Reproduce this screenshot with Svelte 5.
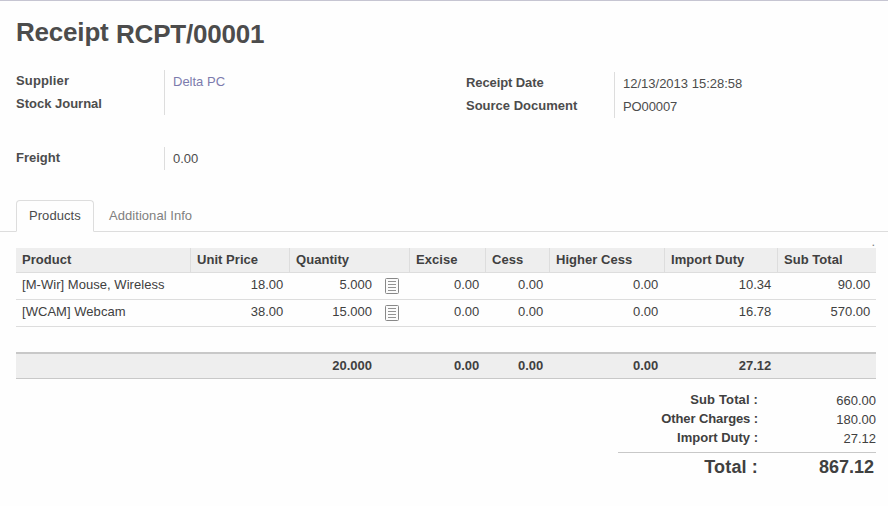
<script>
  const columns = ['Product', 'Unit Price', 'Quantity', 'Excise', 'Cess', 'Higher Cess', 'Import Duty', 'Sub Total'];
  const rows = [
    ['[M-Wir] Mouse, Wireless', '18.00', '5.000', '0.00', '0.00', '0.00', '10.34', '90.00'],
    ['[WCAM] Webcam', '38.00', '15.000', '0.00', '0.00', '0.00', '16.78', '570.00'],
  ];
  const sums = ['', '', '20.000', '0.00', '0.00', '0.00', '27.12', ''];
  const totals = [
    ['Sub Total :', '660.00'],
    ['Other Charges :', '180.00'],
    ['Import Duty :', '27.12'],
  ];
</script>

<main>
  <h1><span>Receipt</span><span class="number">RCPT/00001</span></h1>

  <div class="groups">
    <dl class="left">
      <div class="names"><dt class="wide">Supplier</dt><dt>Stock Journal</dt></div>
      <div class="values"><dd class="link">Delta PC</dd><dd></dd></div>
    </dl>
    <dl class="right">
      <div class="names"><dt class="tight">Receipt Date</dt><dt>Source Document</dt></div>
      <div class="values"><dd>12/13/2013 15:28:58</dd><dd class="tight">PO00007</dd></div>
    </dl>
  </div>
  <dl class="freight">
    <div class="names"><dt>Freight</dt></div>
    <div class="values"><dd>0.00</dd></div>
  </dl>

  <nav>
    <span class="tab active">Products</span>
    <span class="tab">Additional Info</span>
  </nav>

  <div class="pager">.</div>
  <section class="list">
    <div class="row head">
      {#each columns as c}<span>{c}</span>{/each}
    </div>
    {#each rows as row}
      <div class="row">
        {#each row as cell, i}
          <span class:qty={i === 2}>{cell}{#if i === 2}<svg width="14" height="16" viewBox="0 0 14 16"><rect x=".5" y=".5" width="13" height="15" rx="1" fill="#fbfbfb" stroke="#888"/><path d="M3 3.5h8M3 6.5h8M3 9.5h8M3 12.5h8" stroke="#929292"/></svg>{/if}</span>
        {/each}
      </div>
    {/each}
    <div class="row foot">
      {#each sums as s, i}<span class:qty={i === 2}>{s}</span>{/each}
    </div>
  </section>

  <section class="totals">
    {#each totals as [name, value], i}
      <div class="line"><b class:wide={i === 0} class:tight={i === 1}>{name}</b><span>{value}</span></div>
    {/each}
    <div class="grand"><b class="wide">Total :</b><b>867.12</b></div>
  </section>
</main>

<style>
  :global(body) { background: #fefefe; }
  main {
    box-sizing: border-box;
    height: 506px;
    overflow: hidden;
    border-top: 1px solid #c6c5d2;
    font: 13px/23px "Liberation Sans", Arial, sans-serif;
    color: #404040;
    white-space: nowrap;
  }
  h1 {
    display: flex;
    height: 69px;
    margin: 0;
    padding: 16px 16px 0;
    box-sizing: border-box;
    font-size: 26px;
    line-height: 30px;
    letter-spacing: -0.2px;
    color: #4c4c4c;
  }
  .number { padding: 2px 0 0 7.5px; }
  .groups { display: flex; height: 77px; padding-left: 16px; }
  dl { display: flex; margin: 0; align-items: flex-start; }
  dt { height: 23px; line-height: 22px; font-weight: bold; color: #4c4c4c; }
  dd { height: 23px; line-height: 24px; margin: 0; color: #4c4c4c; }
  .wide { letter-spacing: 0.15px; }
  .tight { letter-spacing: -0.1px; }
  .names { width: 148px; }
  .values { padding-left: 8px; border-left: 1px solid #ddd; }
  .left { width: 450px; }
  .left .values { height: 45px; }
  .right { padding-top: 2px; }
  .link { color: #7c7bad; }
  .freight { padding-left: 16px; height: 53px; }
  nav {
    display: flex;
    height: 32px;
    padding-left: 16px;
    box-shadow: inset 0 -1px #ddd;
  }
  .tab {
    box-sizing: border-box;
    height: 32px;
    padding: 0 12px;
    border: 1px solid transparent;
    line-height: 30px;
    letter-spacing: 0.05px;
    color: #808080;
    margin-right: 2px;
  }
  .active {
    width: 78px;
    border-color: #ddd #ddd #fefefe;
    border-radius: 4px 4px 0 0;
    background: #fefefe;
    color: #4c4c4c;
  }
  .pager {
    height: 16px;
    padding-right: 13px;
    line-height: 19px;
    text-align: right;
    color: #808080;
  }
  .list { width: 860px; margin-left: 16px; }
  .row {
    box-sizing: border-box;
    display: grid;
    grid-template-columns: 174px 99px 120px 76px 64px 115px 113px 99px;
    height: 27px;
    border-bottom: 1px solid #ddd;
    line-height: 24px;
  }
  .row span { padding: 0 5.7px 0 6px; text-align: right; }
  .row span:first-child, .head span { text-align: left; letter-spacing: 0.04px; }
  .head {
    height: 25px;
    background: #eee;
    font-weight: bold;
  }
  .head span + span { border-left: 1px solid #ddd; }
  .row .qty { display: flex; justify-content: flex-end; padding-right: 37px; }
  .qty svg { margin: 5px -27px 0 13px; }
  .foot {
    margin-top: 25px;
    border-top: 2px solid #c8c8c8;
    border-bottom-color: #c8c8c8;
    background: #eee;
    font-weight: bold;
  }
  .totals { width: 258px; margin: 11px 0 0 618px; }
  .line { display: flex; height: 19px; line-height: 20px; }
  .line b, .grand b:first-child { width: 140px; text-align: right; }
  .line span { flex: 1; line-height: 22px; text-align: right; }
  .grand {
    display: flex;
    margin-top: 5px;
    border-top: 1px solid #c8c8c8;
    font-size: 18px;
    line-height: 28px;
  }
  .grand b + b { flex: 1; padding-right: 2px; text-align: right; }
</style>
